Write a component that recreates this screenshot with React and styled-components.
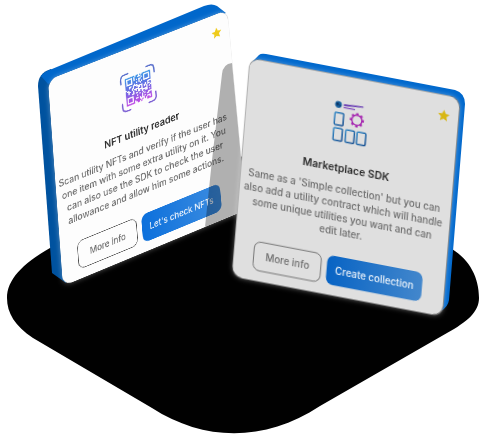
import React from "react";
import styled, { createGlobalStyle } from "styled-components";

const CARD_W = 304;
const CARD_H = 313;

/* Perspective matrix that lays a w×h card onto four corners (tl, tr, br, bl). */
function project(w, h, [[x0, y0], [x1, y1], [x2, y2], [x3, y3]]) {
  const dx1 = x1 - x2;
  const dx2 = x3 - x2;
  const sx = x0 - x1 + x2 - x3;
  const dy1 = y1 - y2;
  const dy2 = y3 - y2;
  const sy = y0 - y1 + y2 - y3;
  const det = dx1 * dy2 - dx2 * dy1;
  const g = (sx * dy2 - dx2 * sy) / det;
  const k = (dx1 * sy - sx * dy1) / det;
  const a = x1 - x0 + g * x1;
  const b = x3 - x0 + k * x3;
  const d = y1 - y0 + g * y1;
  const e = y3 - y0 + k * y3;
  return `matrix3d(${[
    a / w, d / w, 0, g / w,
    b / h, e / h, 0, k / h,
    0, 0, 1, 0,
    x0, y0, 0, 1,
  ].join(",")})`;
}

const GlobalStyle = createGlobalStyle`
  *, *::before, *::after { box-sizing: border-box; }
  body {
    margin: 0;
    background: #ffffff;
    font-family: Inter, "Open Sans", sans-serif;
  }
`;

const Scene = styled.main`
  position: relative;
  width: 100%;
  max-width: 489px;
  aspect-ratio: 489 / 437;
  margin: 0 auto;
  overflow: hidden;
`;

const Scenery = styled.svg`
  position: absolute;
  inset: 0;
  width: 489px;
  height: 437px;
  pointer-events: none;
`;

const Card = styled.article`
  position: absolute;
  top: 0;
  left: 0;
  width: ${CARD_W}px;
  height: ${CARD_H}px;
  padding: 36px ${(p) => p.$inset}px 14px 8px;
  display: flex;
  flex-direction: column;
  align-items: center;
  border-radius: 15px;
  background: ${(p) => p.$face};
  box-shadow: 0 0 1px #777777, 0 0 8px rgba(255, 255, 255, 0.35);
  transform-origin: 0 0;
  transform: ${(p) => project(CARD_W, CARD_H, p.$corners)};
`;

const Favourite = styled.svg`
  position: absolute;
  top: 20px;
  right: 12px;
  width: 18px;
  height: 18px;
  fill: ${(p) => p.$tone};
`;

const Illustration = styled.svg`
  flex: none;
  width: 60px;
  height: 60px;
`;

const Title = styled.h2`
  margin: 24px 0 8px;
  font-size: 15px;
  line-height: 24px;
  font-weight: 600;
  color: #2b2b2b;
  white-space: nowrap;
`;

const Description = styled.p`
  margin: 0;
  display: flex;
  flex-direction: column;
  align-items: center;
  font-size: 14px;
  line-height: 20px;
  font-weight: 500;
  color: #6c6c6c;
`;

const Line = styled.span`
  white-space: nowrap;
`;

const Actions = styled.div`
  display: flex;
  gap: 8px;
  margin-top: auto;
`;

const Button = styled.button`
  height: 42px;
  padding: 0 12px;
  border-radius: 10px;
  font: 500 ${(p) => p.$size}px/20px Inter, "Open Sans", sans-serif;
  white-space: nowrap;
`;

const OutlineButton = styled(Button)`
  min-width: 98px;
  border: 1px solid #4a4a4a;
  background: transparent;
  color: #6c6c6c;
`;

const PrimaryButton = styled(Button)`
  border: 0;
  background: linear-gradient(90deg, ${(p) => p.$from}, ${(p) => p.$to});
  color: #eef4fb;
`;

const N = 21;
const finder = (x, y, ox, oy) => {
  const i = x - ox;
  const j = y - oy;
  if (i < 0 || j < 0 || i > 6 || j > 6) return null;
  const ring = Math.max(Math.abs(i - 3), Math.abs(j - 3));
  return ring !== 2;
};
const qrPath = (() => {
  let d = "";
  let seed = 11;
  for (let y = 0; y < N; y++) {
    for (let x = 0; x < N; x++) {
      seed = (seed * 1103515245 + 12345) % 2147483648;
      const f = finder(x, y, 0, 0) ?? finder(x, y, 14, 0) ?? finder(x, y, 0, 14);
      if (f ?? seed / 2147483648 > 0.42) d += `M${x} ${y}h1v1h-1z`;
    }
  }
  return d;
})();

const QrIcon = () => (
  <Illustration viewBox="0 0 62 62" aria-hidden="true">
    <defs>
      <linearGradient id="qr" gradientUnits="userSpaceOnUse" x1="0" y1="0" x2="0" y2="21">
        <stop offset="0" stopColor="#3a96e6" />
        <stop offset="0.5" stopColor="#7068e2" />
        <stop offset="1" stopColor="#c14be6" />
      </linearGradient>
    </defs>
    <path d={qrPath} fill="url(#qr)" transform="translate(9 9) scale(2.1)" />
    <g fill="none" strokeWidth="2.4" strokeLinecap="round">
      <path d="M2 15V9Q2 2 9 2h6M47 2h6q7 0 7 7v6" stroke="#5a70cc" />
      <path d="M2 47v6q0 7 7 7h6M47 60h6q7 0 7-7v-6" stroke="#7f63d4" />
    </g>
  </Illustration>
);

const gearTeeth = [0, 45, 90, 135, 180, 225, 270, 315];

const MarketIcon = () => (
  <Illustration viewBox="0 0 62 62" aria-hidden="true">
    <defs>
      <linearGradient id="tile" x1="0" y1="0" x2="1" y2="1">
        <stop offset="0" stopColor="#3489c6" />
        <stop offset="1" stopColor="#174f91" />
      </linearGradient>
    </defs>
    <circle cx="12" cy="6" r="5" fill="#17609f" />
    <path d="M8 5l3-2 2 3-2 2zM14 6l2 1-2 2z" fill="#0c315e" />
    <path d="M20 4L49 2L49 4L20 7Z" fill="#6a3fb4" />
    <path d="M20 9h17" stroke="#8450c0" strokeWidth="1.8" />
    <g fill="none" stroke="url(#tile)" strokeWidth="2.2">
      <rect x="8" y="18" width="13" height="18" rx="1.5" />
      <rect x="8" y="41" width="13" height="18" rx="1.5" />
      <rect x="26" y="41" width="13" height="18" rx="1.5" />
      <rect x="43" y="41" width="13" height="18" rx="1.5" />
    </g>
    <g transform="translate(41 24)" stroke="#a627b0" fill="none">
      <circle r="7.5" strokeWidth="2" />
      {gearTeeth.map((a) => (
        <path key={a} d="M0-7.5v-3" strokeWidth="3.6" transform={`rotate(${a})`} />
      ))}
    </g>
  </Illustration>
);

const cards = {
  reader: {
    title: "NFT utility reader",
    lines: [
      "Scan utility NFTs and verify if the user has",
      "one item with some extra utility on it. You",
      "can also use the SDK to check the user",
      "allowance and allow him some actions.",
    ],
    action: "Let's check NFTs",
    icon: <QrIcon />,
    face: "#fdfdfd",
    star: "#efcb1b",
    from: "#0c70dc",
    to: "#3c8ce0",
    inset: 20,
    buttonSize: 13,
    corners: [[48, 80], [227, 10], [246, 210], [63, 286]],
  },
  market: {
    title: "Marketplace SDK",
    lines: [
      "Same as a 'Simple collection' but you can",
      "also add a utility contract which will handle",
      "some unique utilities you want and can",
      "edit later.",
    ],
    action: "Create collection",
    icon: <MarketIcon />,
    face: "#dfdfdf",
    star: "#d8b713",
    from: "#0763c4",
    to: "#4387cc",
    inset: 12,
    buttonSize: 14,
    corners: [[250, 58], [460, 98], [442, 316], [232, 276]],
  },
};

const UtilityCard = ({ data }) => (
  <Card $face={data.face} $inset={data.inset} $corners={data.corners}>
    <Favourite viewBox="0 0 24 24" $tone={data.star} aria-hidden="true">
      <path d="M12 1l3.3 7.2 7.8.9-5.8 5.3 1.6 7.7L12 18.2l-6.9 3.9 1.6-7.7L.9 9.1l7.8-.9z" />
    </Favourite>
    {data.icon}
    <Title>{data.title}</Title>
    <Description>
      {data.lines.map((line) => (
        <Line key={line}>{line} </Line>
      ))}
    </Description>
    <Actions>
      <OutlineButton type="button" $size={data.buttonSize}>
        More info
      </OutlineButton>
      <PrimaryButton type="button" $size={data.buttonSize} $from={data.from} $to={data.to}>
        {data.action}
      </PrimaryButton>
    </Actions>
  </Card>
);

export default function App() {
  return (
    <>
      <GlobalStyle />
      <Scene>
        {/* floor and the thickness of the left card */}
        <Scenery viewBox="0 0 489 437" aria-hidden="true">
          <path
            d="M7 298C7 280 22 264 50 248L180 170C215 152 262 152 300 170L452 249C470 260 479 278 479 298C479 312 467 322 447 333L320 406C265 442 205 442 152 408L33 338C15 326 7 313 7 298Z"
            fill="#010101"
          />
          <path d="M38 86Q38 73 51 69L60 80L66 283L52 273Z" fill="#00529f" />
          <path d="M41 76Q44 72 52 69L204 6Q212 3 217 6L226 13L60 78L48 84Z" fill="#0067cb" />
        </Scenery>
        <UtilityCard data={cards.reader} />
        {/* shadow cast on the left card, thickness of the right card */}
        <Scenery viewBox="0 0 489 437" aria-hidden="true">
          <path d="M232 63Q223 64 222 74L212 160L205 227L246 210Z" fill="#000000" fillOpacity="0.3" />
          <path
            d="M252 62L259 55Q261 53 266 54L455 90Q465 93 465 104L449 300Q448 307 441 311Z"
            fill="#0068cd"
          />
        </Scenery>
        <UtilityCard data={cards.market} />
      </Scene>
    </>
  );
}
